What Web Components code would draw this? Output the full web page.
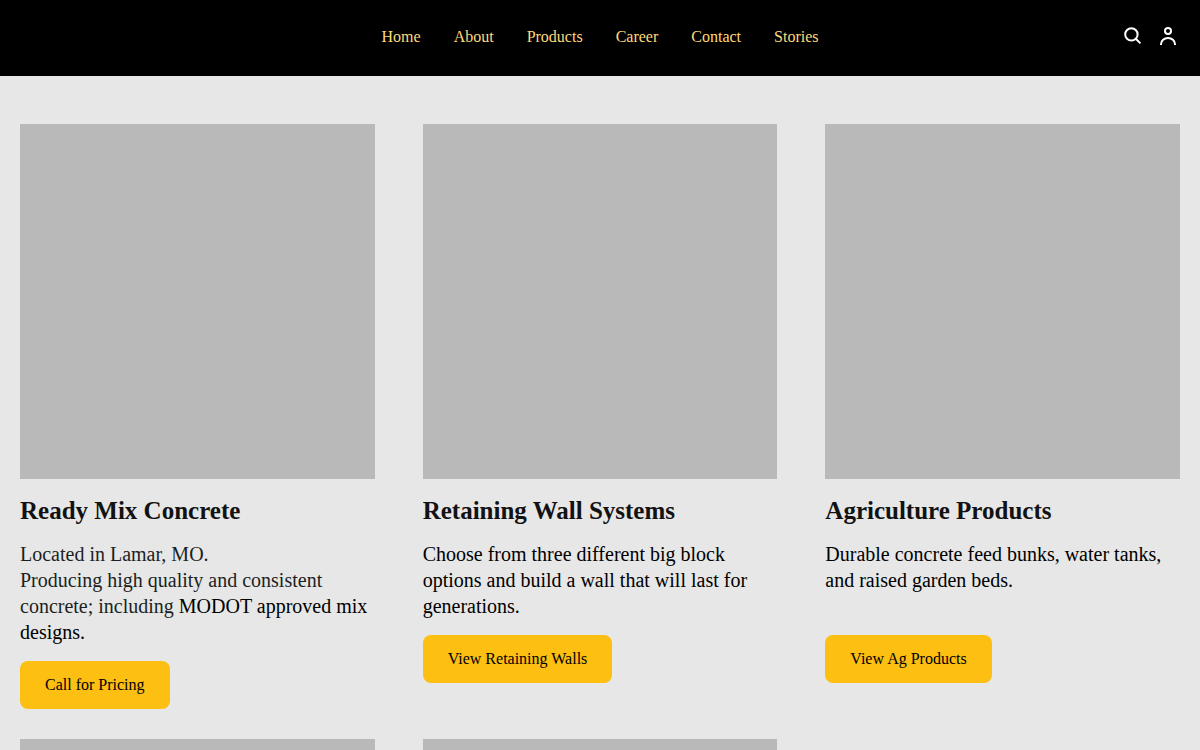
<!DOCTYPE html>
<html lang="en">
<head>
<meta charset="utf-8">
<meta name="viewport" content="width=device-width, initial-scale=1">
<title>Products</title>
<style>
  body {
    margin: 0;
    background: #e7e7e7;
    color: #000;
    font-family: "Liberation Serif", "Times New Roman", serif;
    font-size: 20px;
    line-height: 26px;
  }
  .soft { color: #1c1f22; }
</style>
</head>
<body>
<site-header>
  <nav-link href="#home">Home</nav-link>
  <nav-link href="#about">About</nav-link>
  <nav-link href="#products">Products</nav-link>
  <nav-link href="#career">Career</nav-link>
  <nav-link href="#contact">Contact</nav-link>
  <nav-link href="#stories">Stories</nav-link>
</site-header>
<product-grid>
  <product-card>
    <span slot="title">Ready Mix Concrete</span>
    <span class="soft">Located in Lamar, MO.<br>Producing high quality and consistent concrete; including</span> MODOT approved mix designs.
    <action-link slot="action" href="#pricing">Call for Pricing</action-link>
  </product-card>
  <product-card>
    <span slot="title">Retaining Wall Systems</span>
    Choose from three different big block options and build a wall that will last for generations.
    <action-link slot="action" href="#walls">View Retaining Walls</action-link>
  </product-card>
  <product-card>
    <span slot="title">Agriculture Products</span>
    Durable concrete feed bunks, water tanks, and raised garden beds.
    <action-link slot="action" href="#agriculture">View Ag Products</action-link>
  </product-card>
  <product-image></product-image>
  <product-image></product-image>
</product-grid>

<script>
  class ShadowElement extends HTMLElement {
    constructor() {
      super();
      this.attachShadow({ mode: "open" }).innerHTML = this.constructor.markup;
    }
  }

  class LinkElement extends ShadowElement {
    connectedCallback() {
      this.shadowRoot.querySelector("a").href = this.getAttribute("href");
    }
  }

  customElements.define("nav-link", class extends LinkElement {
    static markup = `
      <style>
        :host { display: block; }
        a { display: block; color: #ffd978; font-size: 16px; line-height: 24px; text-decoration: none; }
        a:hover { text-decoration: underline; }
      </style>
      <a><slot></slot></a>`;
  });

  customElements.define("action-link", class extends LinkElement {
    static markup = `
      <style>
        :host { display: block; }
        a {
          display: inline-block;
          vertical-align: top;
          padding: 12px 25px;
          border-radius: 8px;
          background: #fcbf12;
          color: #000;
          font-size: 16px;
          line-height: 24px;
          text-decoration: none;
        }
      </style>
      <a><slot></slot></a>`;
  });

  customElements.define("site-header", class extends ShadowElement {
    static markup = `
      <style>
        :host { display: block; background: #000; }
        header {
          display: grid;
          grid-template-columns: 1fr auto 1fr;
          align-items: center;
          padding: 17px 20px 19px;
        }
        nav { grid-column: 2; display: flex; gap: 33px; }
        .tools { display: flex; justify-content: flex-end; gap: 12px; padding: 7px 0 9px; }
        button { display: block; padding: 0; border: 0; background: none; color: #fff; cursor: pointer; }
        svg { display: block; fill: none; stroke: currentColor; stroke-width: 2; }
      </style>
      <header>
        <nav aria-label="Main"><slot></slot></nav>
        <div class="tools">
          <button type="button" aria-label="Search">
            <svg width="24" height="24" viewBox="0 0 24 24"><circle cx="11.4" cy="10.4" r="6.2"/><path d="M15.8 14.8 20.4 19.4"/></svg>
          </button>
          <button type="button" aria-label="Account">
            <svg width="24" height="24" viewBox="0 0 24 24"><circle cx="12" cy="7" r="3"/><path d="M5 21v-.8a7 6.2 0 0 1 14 0v.8"/></svg>
          </button>
        </div>
      </header>`;
  });

  customElements.define("product-grid", class extends ShadowElement {
    static markup = `
      <style>
        :host { display: block; }
        main {
          display: grid;
          grid-template-columns: repeat(3, minmax(0, 1fr));
          gap: 30px 48px;
          padding: 48px 20px;
        }
        @media (max-width: 700px) { main { grid-template-columns: minmax(0, 1fr); } }
      </style>
      <main><slot></slot></main>`;
  });

  customElements.define("product-image", class extends ShadowElement {
    static markup = `
      <style>:host { display: block; aspect-ratio: 1; background: #b9b9b9; }</style>`;
  });

  customElements.define("product-card", class extends ShadowElement {
    static markup = `
      <style>
        :host { display: block; }
        article { display: flex; flex-direction: column; gap: 16px; }
        h2 { margin: 0; padding-top: 2px; color: #121212; font-size: 25px; line-height: 28px; }
        p { margin: 0; min-height: 78px; }
      </style>
      <article>
        <product-image></product-image>
        <h2><slot name="title"></slot></h2>
        <p><slot></slot></p>
        <slot name="action"></slot>
      </article>`;
  });
</script>
</body>
</html>
